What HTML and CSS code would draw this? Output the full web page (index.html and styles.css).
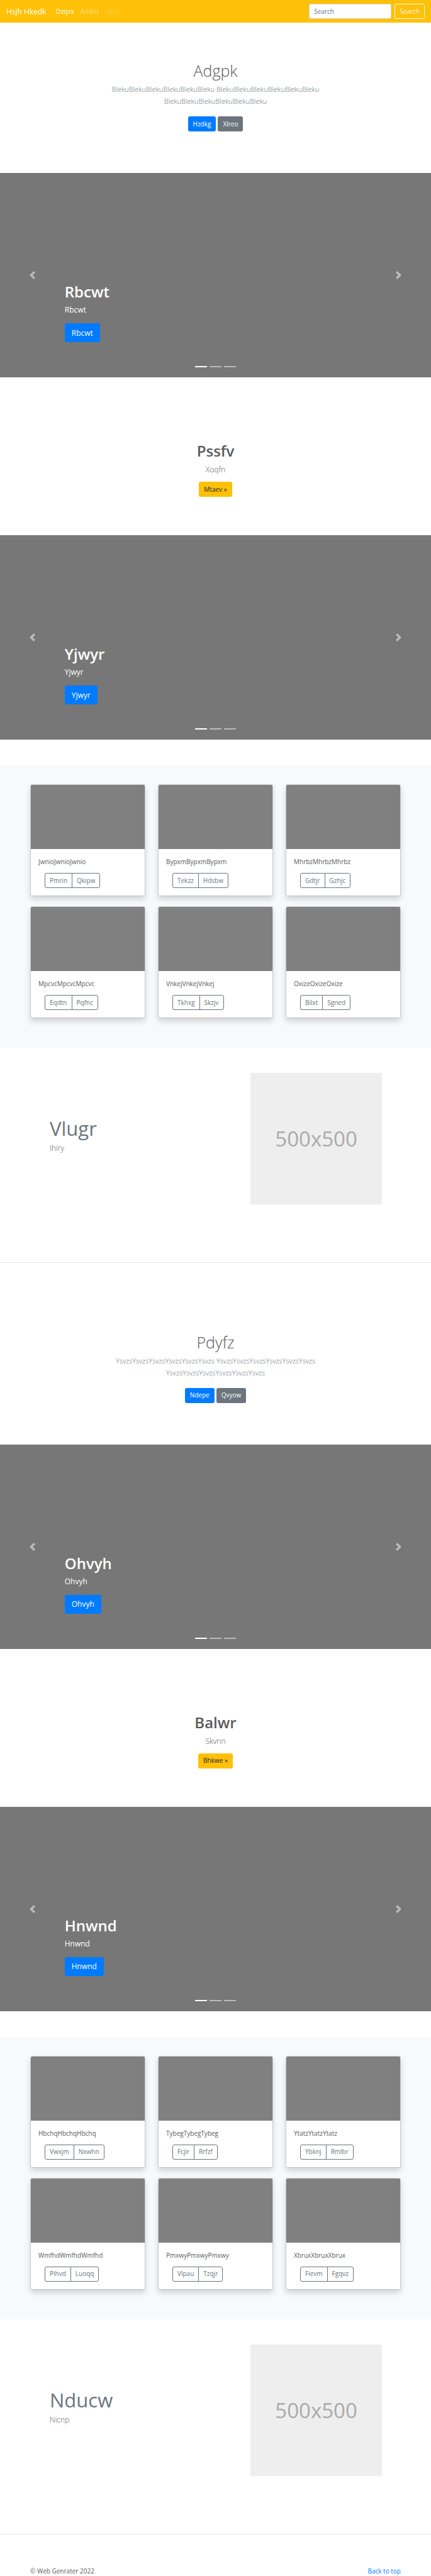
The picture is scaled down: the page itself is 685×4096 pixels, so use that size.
FILE: index.html
```html
<!DOCTYPE html>
<html lang="en">
<head>
<meta charset="utf-8">
<meta name="viewport" content="width=device-width, initial-scale=1">
<title>Hsjh Hkedk</title>
<link rel="stylesheet" href="styles.css">
</head>
<body id="top">
<header class="navbar">
  <a class="brand" href="#top">Hsjh Hkedk</a>
  <nav class="nav-links">
    <a class="nav-link active" href="#top">Ozqxx</a>
    <a class="nav-link" href="#top">Amkld</a>
    <a class="nav-link disabled" href="#top">Djloy</a>
  </nav>
  <form class="search">
    <input class="search-input" type="search" placeholder="Search" aria-label="Search">
    <button class="btn btn-outline-light" type="button">Search</button>
  </form>
</header>

<main>
<section class="hero">
  <h1 class="hero-title">Adgpk</h1>
  <p class="lead">BlekuBlekuBlekuBlekuBlekuBleku BlekuBlekuBlekuBlekuBlekuBleku BlekuBlekuBlekuBlekuBlekuBleku</p>
  <div class="actions"><a class="btn btn-primary" href="#top">Hzdkg</a><a class="btn btn-secondary" href="#top">Xlreo</a></div>
</section>

<section class="carousel">
  <div class="caption">
    <h2 class="caption-title">Rbcwt</h2>
    <p class="caption-text">Rbcwt</p>
    <a class="btn btn-primary btn-lg" href="#top">Rbcwt</a>
  </div>
  <button class="arrow arrow-prev" type="button" aria-label="Previous"><svg viewBox="0 0 8 8"><path d="M5.25 0l-4 4 4 4 1.5-1.5L4.25 4l2.5-2.5L5.25 0z"/></svg></button>
  <button class="arrow arrow-next" type="button" aria-label="Next"><svg viewBox="0 0 8 8"><path d="M2.75 0l-1.5 1.5L3.75 4l-2.5 2.5L2.75 8l4-4-4-4z"/></svg></button>
  <div class="indicators"><span class="dash current"></span><span class="dash"></span><span class="dash"></span></div>
</section>

<section class="intro">
  <h2 class="intro-title">Pssfv</h2>
  <p class="intro-text">Xoqfn</p>
  <a class="btn btn-warning" href="#top">Mtaev »</a>
</section>

<section class="carousel">
  <div class="caption">
    <h2 class="caption-title">Yjwyr</h2>
    <p class="caption-text">Yjwyr</p>
    <a class="btn btn-primary btn-lg" href="#top">Yjwyr</a>
  </div>
  <button class="arrow arrow-prev" type="button" aria-label="Previous"><svg viewBox="0 0 8 8"><path d="M5.25 0l-4 4 4 4 1.5-1.5L4.25 4l2.5-2.5L5.25 0z"/></svg></button>
  <button class="arrow arrow-next" type="button" aria-label="Next"><svg viewBox="0 0 8 8"><path d="M2.75 0l-1.5 1.5L3.75 4l-2.5 2.5L2.75 8l4-4-4-4z"/></svg></button>
  <div class="indicators"><span class="dash current"></span><span class="dash"></span><span class="dash"></span></div>
</section>

<section class="album">
  <article class="card"><div class="card-image"></div><div class="card-body"><p class="card-text">JwnioJwnioJwnio</p><div class="btn-group"><button class="btn" type="button">Pmrin</button><button class="btn" type="button">Qkipw</button></div></div></article>
  <article class="card"><div class="card-image"></div><div class="card-body"><p class="card-text">BypxmBypxmBypxm</p><div class="btn-group"><button class="btn" type="button">Tekzz</button><button class="btn" type="button">Hdsbw</button></div></div></article>
  <article class="card"><div class="card-image"></div><div class="card-body"><p class="card-text">MhrbzMhrbzMhrbz</p><div class="btn-group"><button class="btn" type="button">Gdtjr</button><button class="btn" type="button">Gzhjc</button></div></div></article>
  <article class="card"><div class="card-image"></div><div class="card-body"><p class="card-text">MpcvcMpcvcMpcvc</p><div class="btn-group"><button class="btn" type="button">Eqdtn</button><button class="btn" type="button">Pqfnc</button></div></div></article>
  <article class="card"><div class="card-image"></div><div class="card-body"><p class="card-text">VnkejVnkejVnkej</p><div class="btn-group"><button class="btn" type="button">Tkhxg</button><button class="btn" type="button">Skzjv</button></div></div></article>
  <article class="card"><div class="card-image"></div><div class="card-body"><p class="card-text">OxizeOxizeOxize</p><div class="btn-group"><button class="btn" type="button">Bilxt</button><button class="btn" type="button">Sgned</button></div></div></article>
</section>

<section class="featurette">
  <div class="feature-copy">
    <h2 class="feature-title">Vlugr</h2>
    <p class="feature-text">Ihiry</p>
  </div>
  <div class="feature-media"><div class="placeholder">500x500</div></div>
</section>
<hr class="divider">

<section class="hero">
  <h1 class="hero-title">Pdyfz</h1>
  <p class="lead">YsvzsYsvzsYsvzsYsvzsYsvzsYsvzs YsvzsYsvzsYsvzsYsvzsYsvzsYsvzs YsvzsYsvzsYsvzsYsvzsYsvzsYsvzs</p>
  <div class="actions"><a class="btn btn-primary" href="#top">Ndepe</a><a class="btn btn-secondary" href="#top">Qvyow</a></div>
</section>

<section class="carousel">
  <div class="caption">
    <h2 class="caption-title">Ohvyh</h2>
    <p class="caption-text">Ohvyh</p>
    <a class="btn btn-primary btn-lg" href="#top">Ohvyh</a>
  </div>
  <button class="arrow arrow-prev" type="button" aria-label="Previous"><svg viewBox="0 0 8 8"><path d="M5.25 0l-4 4 4 4 1.5-1.5L4.25 4l2.5-2.5L5.25 0z"/></svg></button>
  <button class="arrow arrow-next" type="button" aria-label="Next"><svg viewBox="0 0 8 8"><path d="M2.75 0l-1.5 1.5L3.75 4l-2.5 2.5L2.75 8l4-4-4-4z"/></svg></button>
  <div class="indicators"><span class="dash current"></span><span class="dash"></span><span class="dash"></span></div>
</section>

<section class="intro">
  <h2 class="intro-title">Balwr</h2>
  <p class="intro-text">Skvnn</p>
  <a class="btn btn-warning" href="#top">Bhkwe »</a>
</section>

<section class="carousel">
  <div class="caption">
    <h2 class="caption-title">Hnwnd</h2>
    <p class="caption-text">Hnwnd</p>
    <a class="btn btn-primary btn-lg" href="#top">Hnwnd</a>
  </div>
  <button class="arrow arrow-prev" type="button" aria-label="Previous"><svg viewBox="0 0 8 8"><path d="M5.25 0l-4 4 4 4 1.5-1.5L4.25 4l2.5-2.5L5.25 0z"/></svg></button>
  <button class="arrow arrow-next" type="button" aria-label="Next"><svg viewBox="0 0 8 8"><path d="M2.75 0l-1.5 1.5L3.75 4l-2.5 2.5L2.75 8l4-4-4-4z"/></svg></button>
  <div class="indicators"><span class="dash current"></span><span class="dash"></span><span class="dash"></span></div>
</section>

<section class="album">
  <article class="card"><div class="card-image"></div><div class="card-body"><p class="card-text">HbchqHbchqHbchq</p><div class="btn-group"><button class="btn" type="button">Vwxjm</button><button class="btn" type="button">Nxwhn</button></div></div></article>
  <article class="card"><div class="card-image"></div><div class="card-body"><p class="card-text">TybegTybegTybeg</p><div class="btn-group"><button class="btn" type="button">Fcjir</button><button class="btn" type="button">Rrfzf</button></div></div></article>
  <article class="card"><div class="card-image"></div><div class="card-body"><p class="card-text">YtatzYtatzYtatz</p><div class="btn-group"><button class="btn" type="button">Ybknj</button><button class="btn" type="button">Rmlbr</button></div></div></article>
  <article class="card"><div class="card-image"></div><div class="card-body"><p class="card-text">WmfhdWmfhdWmfhd</p><div class="btn-group"><button class="btn" type="button">Pihvd</button><button class="btn" type="button">Luoqq</button></div></div></article>
  <article class="card"><div class="card-image"></div><div class="card-body"><p class="card-text">PmxwyPmxwyPmxwy</p><div class="btn-group"><button class="btn" type="button">Vlpau</button><button class="btn" type="button">Tzqjr</button></div></div></article>
  <article class="card"><div class="card-image"></div><div class="card-body"><p class="card-text">XbruxXbruxXbrux</p><div class="btn-group"><button class="btn" type="button">Fievm</button><button class="btn" type="button">Fgqvz</button></div></div></article>
</section>

<section class="featurette">
  <div class="feature-copy">
    <h2 class="feature-title">Nducw</h2>
    <p class="feature-text">Nicnp</p>
  </div>
  <div class="feature-media"><div class="placeholder">500x500</div></div>
</section>
<hr class="divider">
</main>

<footer class="footer">
  <span>© Web Genrater 2022</span>
  <a class="footer-link" href="#top">Back to top</a>
</footer>
</body>
</html>
```
FILE: styles.css
```css
* { box-sizing: border-box; }

body {
  margin: 0;
  font-family: "Open Sans", "Noto Sans", sans-serif;
  font-size: 10px;
  line-height: 15px;
  color: #5a5a5a;
  background: #fff;
}

h1, h2, p { margin: 0; }
a { text-decoration: none; }

.btn {
  display: inline-flex;
  align-items: center;
  justify-content: center;
  height: 24px;
  padding: 0 7px;
  border: 1px solid transparent;
  border-radius: 3px;
  background: transparent;
  font: inherit;
  color: #6c757d;
}
.btn-primary { background: #007bff; color: #fff; }
.btn-secondary { background: #6c757d; color: #fff; }
.btn-warning { background: #ffc107; color: #212529; }
.btn-outline-light { border-color: #f8f9fa; color: #f8f9fa; }
.btn-lg { height: 30px; padding: 0 10px; font-size: 12px; }

/* Navigation bar */
.navbar {
  display: flex;
  align-items: center;
  height: 36px;
  padding: 0 10px;
  background: #ffc107;
}
.brand { margin-right: 15px; font-size: 12px; color: #fff; }
.nav-links { display: flex; gap: 10px; }
.nav-link { color: rgba(255, 255, 255, .5); }
.nav-link.active { color: #fff; }
.nav-link.disabled { color: rgba(255, 255, 255, .25); }
.search { display: flex; gap: 5px; margin-left: auto; }
.search-input {
  width: 131px;
  height: 24px;
  padding: 0 7px;
  border: 1px solid #ced4da;
  border-radius: 3px;
  background: #fff;
  font: inherit;
}
.search-input::placeholder { color: #6c757d; opacity: 1; }

/* Centered text sections */
.hero {
  display: flex;
  flex-direction: column;
  align-items: center;
  padding: 60px 24px 66px;
  text-align: center;
}
.hero-title { margin-bottom: 4px; font-size: 25px; line-height: 32px; font-weight: 300; }
.lead {
  max-width: 386px;
  margin-bottom: 15px;
  font-size: 11px;
  line-height: 19px;
  font-weight: 300;
  color: #6c757d;
}
.actions { display: flex; gap: 3px; }

.intro {
  display: flex;
  flex-direction: column;
  align-items: center;
  padding: 101px 24px 61px;
}
.intro-title { margin-bottom: 4px; font-size: 24px; line-height: 32px; font-weight: 600; }
.intro-text { margin-bottom: 10px; font-size: 12px; line-height: 19px; font-weight: 300; }

/* Carousel */
.carousel {
  position: relative;
  display: flex;
  align-items: flex-end;
  min-height: 325px;
  padding: 0 15% 56px;
  background: #777;
  color: #fff;
}
.caption-title { margin-bottom: 4px; font-size: 24px; line-height: 30px; font-weight: 600; }
.caption-text { margin-bottom: 12px; font-size: 12px; line-height: 19px; }
.arrow {
  position: absolute;
  top: 0;
  bottom: 0;
  display: flex;
  align-items: center;
  justify-content: center;
  width: 15%;
  padding: 0;
  border: 0;
  background: none;
  opacity: .5;
}
.arrow-prev { left: 0; }
.arrow-next { right: 0; }
.arrow svg { width: 13px; height: 13px; fill: #fff; }
.indicators {
  position: absolute;
  right: 0;
  bottom: 16px;
  left: 0;
  display: flex;
  justify-content: center;
  gap: 4px;
}
.dash { width: 19px; height: 2px; background: rgba(255, 255, 255, .5); }
.dash.current { background: #fff; }

/* Card album */
.album {
  display: grid;
  grid-template-columns: repeat(3, 1fr);
  gap: 16px 20px;
  margin-top: 41px;
  padding: 30px 48px 47px;
  background: #f8f9fa;
}
.card {
  border: 1px solid rgba(0, 0, 0, .125);
  border-radius: 3px;
  background: #fff;
  background-clip: padding-box;
  box-shadow: 0 5px 10px rgba(0, 0, 0, .15);
}
.card-image { height: 102px; border-radius: 2px 2px 0 0; background: #808080; }
.card-body { padding: 13px 12px 12px; }
.card-text { margin-bottom: 10px; }
.btn-group { display: flex; margin-left: 10px; }
.btn-group .btn { border-color: #6c757d; }
.btn-group .btn:first-child { border-radius: 3px 0 0 3px; }
.btn-group .btn:last-child { margin-left: -1px; border-radius: 0 3px 3px 0; }

/* Featurette */
.featurette {
  display: grid;
  grid-template-columns: 7fr 5fr;
  padding: 40px 69px 92px;
}
.feature-copy { padding: 72px 10px 0; }
.feature-media { padding: 0 9px 0 10px; }
.feature-title { margin-bottom: 6px; font-size: 31px; line-height: 32px; font-weight: 400; color: #6c757d; }
.feature-text { font-size: 12px; line-height: 19px; font-weight: 300; }
.placeholder {
  display: flex;
  align-items: center;
  justify-content: center;
  aspect-ratio: 1;
  background: #eee;
  font-size: 33px;
  color: #aaa;
}
.divider { height: 1px; margin: 0 0 50px; border: 0; background: #e5e5e5; }

.footer {
  display: flex;
  justify-content: space-between;
  padding: 0 48px;
  line-height: 16px;
}
.footer-link { color: #007bff; }
```
